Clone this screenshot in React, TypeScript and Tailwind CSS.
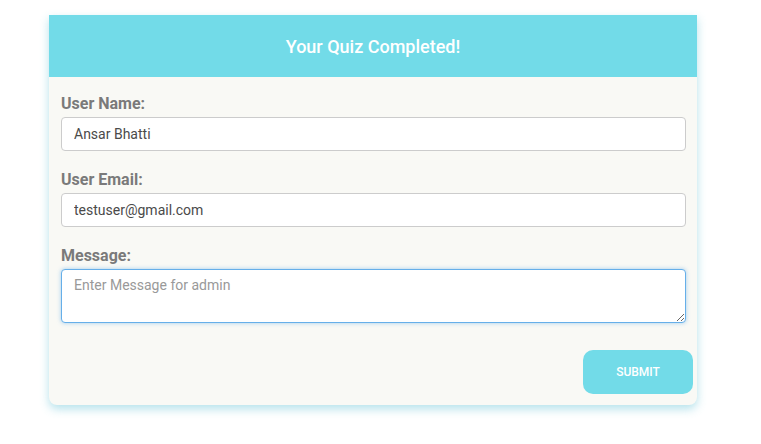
import React from "react";

export default function App() {
  return (
    <div className="w-[761px] h-[444px] bg-white" style={{ fontFamily: "Roboto, 'Liberation Sans', sans-serif" }}>
      <div className="pt-[15px] pl-[49px]">
        <div className="w-[648px] h-[390px] bg-[#f9f9f5] rounded-b-[8px] shadow-[0_4px_10px_rgba(90,190,210,0.45)] flex flex-col">
          <div className="h-[62px] bg-[#72dbe8] flex items-center justify-center">
            <h1 className="text-white text-[18px] font-medium">Your Quiz Completed!</h1>
          </div>
          <div className="px-[12px] pt-[17px] flex flex-col">
            <label className="text-[#7a7a7a] text-[16px] font-bold leading-[20px] mb-[3px]">User Name:</label>
            <input
              readOnly
              value="Ansar Bhatti"
              className="h-[34px] w-[625px] rounded-[4px] border border-[#cccccc] bg-white px-[12px] text-[14px] text-[#4a4a4a] outline-none"
            />
            <label className="text-[#7a7a7a] text-[16px] font-bold leading-[20px] mt-[19px] mb-[3px]">User Email:</label>
            <input
              readOnly
              value="testuser@gmail.com"
              className="h-[34px] w-[625px] rounded-[4px] border border-[#cccccc] bg-white px-[12px] text-[14px] text-[#4a4a4a] outline-none"
            />
            <label className="text-[#7a7a7a] text-[16px] font-bold leading-[20px] mt-[19px] mb-[3px]">Message:</label>
            <textarea
              placeholder="Enter Message for admin"
              className="h-[54px] w-[625px] rounded-[4px] border border-[#66afe9] shadow-[0_0_4px_rgba(102,175,233,0.6)] bg-white px-[12px] py-[5px] text-[14px] text-[#333] placeholder:text-[#999] outline-none resize-y leading-[20px]"
            />
            <div className="flex justify-end mt-[27px] -mr-[8px]">
              <button className="w-[110px] h-[44px] rounded-[10px] bg-[#72dbe8] text-white text-[12px] font-medium">
                SUBMIT
              </button>
            </div>
          </div>
        </div>
      </div>
    </div>
  );
}
